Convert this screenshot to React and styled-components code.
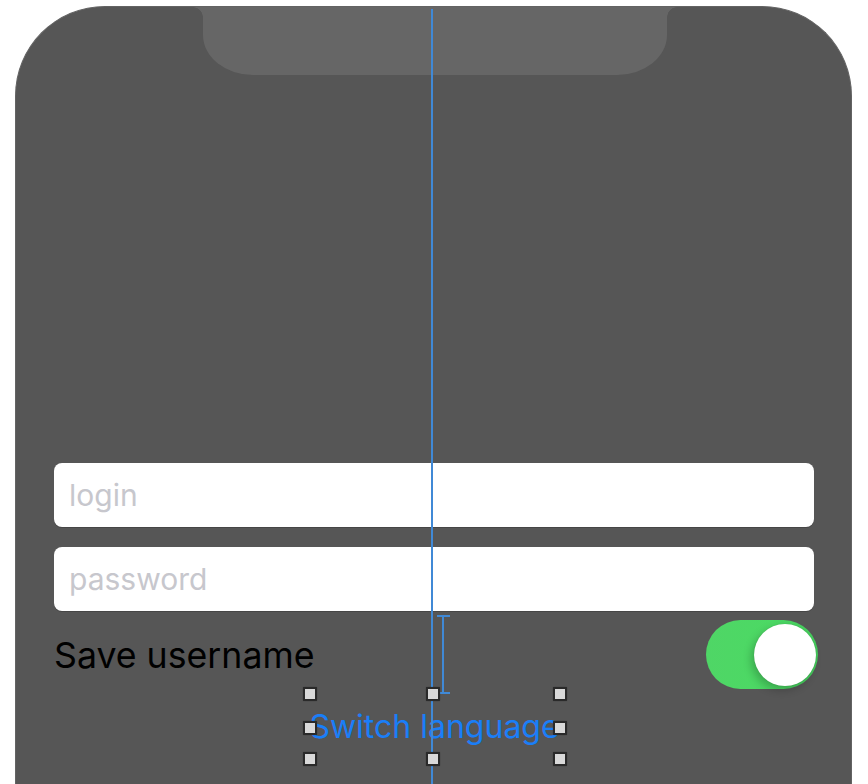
import React from "react";
import styled, { createGlobalStyle } from "styled-components";

const GlobalStyle = createGlobalStyle`
  html, body {
    margin: 0;
    padding: 0;
    background: #ffffff;
    overflow: hidden;
    height: 784px;
  }
  body {
    font-family: Inter, "Liberation Sans", sans-serif;
  }
`;

const Canvas = styled.div`
  width: 868px;
  height: 784px;
  padding: 6px 0 0 15px;
  box-sizing: border-box;
`;

const Phone = styled.div`
  position: relative;
  width: 837px;
  height: 778px;
  box-sizing: border-box;
  background: #565656;
  border: 1px solid #636363;
  border-bottom: none;
  border-radius: 90px 90px 0 0;
  display: flex;
  flex-direction: column;
`;

const Notch = styled.div`
  position: relative;
  align-self: center;
  margin-left: 3px;
  width: 464px;
  height: 68px;
  background: #666666;
  border-radius: 0 0 50px 50px / 0 0 40px 40px;

  &::before,
  &::after {
    content: "";
    position: absolute;
    top: 0;
    width: 10px;
    height: 10px;
    background: radial-gradient(circle at 0 100%, transparent 9.5px, #666666 10px);
  }
  &::before {
    left: -10px;
  }
  &::after {
    right: -10px;
    background: radial-gradient(circle at 100% 100%, transparent 9.5px, #666666 10px);
  }
`;

const Form = styled.div`
  margin-top: 388px;
  padding: 0 37px 0 38px;
  display: flex;
  flex-direction: column;
`;

const Fields = styled.div`
  display: flex;
  flex-direction: column;
  gap: 20px;
`;

const Field = styled.input`
  height: 64px;
  box-sizing: border-box;
  border: none;
  outline: none;
  border-radius: 8px;
  background: #ffffff;
  box-shadow: 0 1px 0 rgba(0, 0, 0, 0.18);
  padding: 0 15px;
  font-family: Inter, "Liberation Sans", sans-serif;
  font-size: 30px;
  color: #000;

  &::placeholder {
    color: #c7c7cd;
  }
`;

const SaveRow = styled.div`
  margin-top: 9px;
  margin-right: -4px;
  height: 69px;
  display: flex;
  align-items: center;
  justify-content: space-between;
`;

const Label = styled.span`
  font-size: 35.7px;
  color: #000000;
  line-height: 1;
  padding-top: 2px;
`;

const Toggle = styled.div`
  width: 112px;
  height: 69px;
  box-sizing: border-box;
  border-radius: 35px;
  background: linear-gradient(90deg, #4fd666 0%, #4cd964 60%, #44c95b 100%);
  display: flex;
  align-items: center;
  justify-content: flex-end;
  padding-right: 2px;
`;

const Thumb = styled.div`
  width: 62px;
  height: 62px;
  border-radius: 50%;
  background: #ffffff;
  box-shadow: -3px 4px 8px rgba(0, 0, 0, 0.22), 0 0 1px rgba(0, 0, 0, 0.2);
`;

const ButtonWrap = styled.div`
  position: relative;
  align-self: center;
  margin-top: 5px;
  margin-left: 1px;
  width: 250px;
  height: 65px;
  display: flex;
  align-items: center;
  justify-content: center;
`;

const LinkButton = styled.button`
  border: none;
  background: transparent;
  padding: 0;
  font-family: Inter, "Liberation Sans", sans-serif;
  font-size: 32px;
  line-height: 65px;
  color: #1a7ef8;
  white-space: nowrap;
`;

const Handle = styled.span`
  position: absolute;
  width: 10px;
  height: 10px;
  left: ${(p) => p.$x}px;
  top: ${(p) => p.$y}px;
  transform: translate(-50%, -50%);
  background: #d9d9d9;
  border: 2px solid #2a2a2a;
  border-radius: 1px;
  box-shadow: 0 0 1px rgba(0, 0, 0, 0.6);
  z-index: 3;
`;

const GuideLine = styled.div`
  position: absolute;
  left: 415px;
  top: 2px;
  bottom: 0;
  width: 2px;
  background: #4089d6;
  z-index: 2;
`;

const IBar = styled.div`
  position: absolute;
  left: 127px;
  top: -79px;
  width: 13px;
  height: 79px;
  box-sizing: border-box;
  border-top: 2px solid #4089d6;
  border-bottom: 2px solid #4089d6;
  display: flex;
  justify-content: center;
  z-index: 2;
`;

const IBarStem = styled.span`
  width: 2px;
  background: #4089d6;
`;

const handles = [
  [0, 0],
  [123, 0],
  [250, 0],
  [0, 34],
  [250, 34],
  [0, 65],
  [123, 65],
  [250, 65],
];

export default function App() {
  return (
    <>
      <GlobalStyle />
      <Canvas>
        <Phone>
          <Notch />
          <GuideLine />
          <Form>
            <Fields>
              <Field placeholder="login" />
              <Field placeholder="password" type="password" />
            </Fields>
            <SaveRow>
              <Label>Save username</Label>
              <Toggle>
                <Thumb />
              </Toggle>
            </SaveRow>
            <ButtonWrap>
              <LinkButton>Switch language</LinkButton>
              <IBar>
                <IBarStem />
              </IBar>
              {handles.map(([x, y], i) => (
                <Handle key={i} $x={x} $y={y} />
              ))}
            </ButtonWrap>
          </Form>
        </Phone>
      </Canvas>
    </>
  );
}
